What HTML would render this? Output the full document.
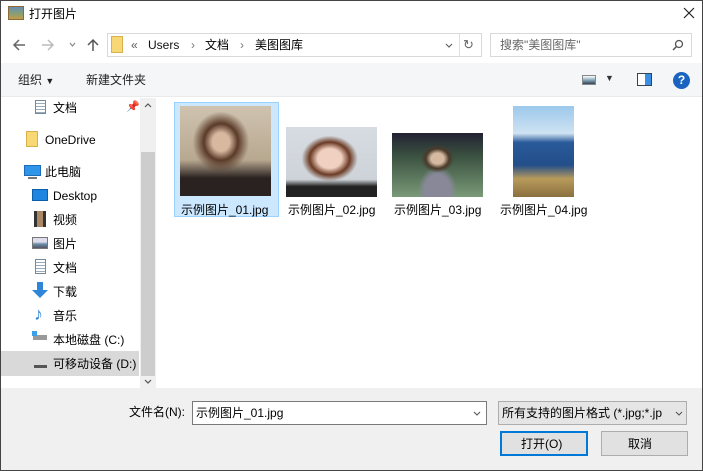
<!DOCTYPE html>
<html><head><meta charset="utf-8"><style>
*{margin:0;padding:0;box-sizing:border-box}
body{width:703px;height:471px;overflow:hidden;background:#fff;font-family:"Liberation Sans","Noto Sans CJK SC",sans-serif;font-size:12px;color:#000;position:relative}
.a{position:absolute;white-space:nowrap}
.t{line-height:16px}
</style></head><body>
<div class="a" style="left:0;top:0;width:703px;height:471px;border:1px solid #444"></div>
<!-- title -->
<div class="a" style="left:8px;top:6px;width:16px;height:14px;background:linear-gradient(#6a8fb0,#8aa070 60%,#c49a4a);border:1px solid #8a6a3a"></div>
<div class="a t" style="left:29px;top:6px">打开图片</div>
<svg class="a" style="left:683px;top:7px" width="12" height="12"><path d="M1 1L11 11M11 1L1 11" stroke="#222" stroke-width="1.2"/></svg>
<!-- nav -->
<svg class="a" style="left:12px;top:39px" width="14" height="12"><path d="M13 6H2M7 1L2 6L7 11" stroke="#666" stroke-width="1.5" fill="none"/></svg>
<svg class="a" style="left:41px;top:39px" width="14" height="12"><path d="M1 6H12M7 1L12 6L7 11" stroke="#bbb" stroke-width="1.5" fill="none"/></svg>
<svg class="a" style="left:69px;top:42px" width="7" height="5"><path d="M1 1L3.5 4L6 1" stroke="#888" stroke-width="1.2" fill="none"/></svg>
<svg class="a" style="left:87px;top:38px" width="12" height="14"><path d="M6 13V2M1 7L6 2L11 7" stroke="#555" stroke-width="1.5" fill="none"/></svg>
<div class="a" style="left:107px;top:33px;width:375px;height:24px;border:1px solid #d9d9d9"></div>
<div class="a" style="left:111px;top:36px;width:12px;height:17px;background:#f8d775;border:1px solid #d8b04c"></div>
<div class="a t" style="left:131px;top:37px;color:#555">«</div>
<div class="a t" style="left:148px;top:37px;color:#111">Users</div>
<div class="a t" style="left:191px;top:37px;color:#777">›</div>
<div class="a t" style="left:205px;top:37px">文档</div>
<div class="a t" style="left:240px;top:37px;color:#777">›</div>
<div class="a t" style="left:255px;top:37px">美图图库</div>
<svg class="a" style="left:445px;top:43px" width="8" height="5"><path d="M1 1L4 4L7 1" stroke="#666" stroke-width="1.2" fill="none"/></svg>
<div class="a" style="left:459px;top:34px;width:1px;height:22px;background:#e0e0e0"></div>
<div class="a t" style="left:463px;top:37px;color:#666;font-size:13px">↻</div>
<div class="a" style="left:490px;top:33px;width:202px;height:24px;border:1px solid #d9d9d9"></div>
<div class="a t" style="left:500px;top:37px;color:#666">搜索"美图图库"</div>
<svg class="a" style="left:672px;top:39px" width="12" height="12"><circle cx="7" cy="5" r="3.5" stroke="#555" stroke-width="1.3" fill="none"/><path d="M4.5 7.5L1 11" stroke="#555" stroke-width="1.5"/></svg>
<!-- toolbar -->
<div class="a" style="left:1px;top:63px;width:701px;height:34px;background:#f5f6f7;border-bottom:1px solid #eaeaea"></div>
<div class="a t" style="left:18px;top:72px;color:#222">组织 <span style="font-size:9px">▼</span></div>
<div class="a t" style="left:86px;top:72px;color:#222">新建文件夹</div>
<div class="a" style="left:582px;top:75px;width:14px;height:10px;background:linear-gradient(#fff,#8ab 50%,#345);border:1px solid #888"></div>
<div class="a" style="left:605px;top:73px;font-size:9px;color:#333">▼</div>
<div class="a" style="left:637px;top:73px;width:15px;height:13px;border:1px solid #345;background:linear-gradient(90deg,#fff 55%,#3a8ee6 55%)"></div>
<div class="a" style="left:673px;top:72px;width:17px;height:17px;border-radius:50%;background:#1a63c0;color:#fff;font-weight:bold;font-size:12px;text-align:center;line-height:17px">?</div>
<!-- nav pane -->
<div class="a" style="left:140px;top:98px;width:16px;height:290px;background:#f0f0f0"></div>
<div class="a" style="left:141px;top:152px;width:14px;height:224px;background:#cdcdcd"></div>
<svg class="a" style="left:144px;top:103px" width="8" height="5"><path d="M1 4L4 1L7 4" stroke="#555" stroke-width="1.2" fill="none"/></svg>
<svg class="a" style="left:144px;top:379px" width="8" height="5"><path d="M1 1L4 4L7 1" stroke="#555" stroke-width="1.2" fill="none"/></svg>
<div class="a" style="left:1px;top:351px;width:138px;height:25px;background:#d9d9d9"></div>
<div class="a" style="left:35px;top:100px;width:11px;height:14px;border:1px solid #789;background:repeating-linear-gradient(#fff 0 2px,#9ab 2px 3px)"></div>
<div class="a t" style="left:53px;top:100px">文档</div>
<div class="a" style="left:126px;top:100px;color:#999;font-size:11px">📌</div>
<div class="a" style="left:26px;top:131px;width:12px;height:16px;background:#f8d775;border:1px solid #d8b04c"></div>
<div class="a t" style="left:45px;top:132px">OneDrive</div>
<div class="a" style="left:24px;top:165px;width:17px;height:11px;background:#2f95e8;border:1px solid #1a6bb8"></div>
<div class="a" style="left:28px;top:177px;width:9px;height:2px;background:#777"></div>
<div class="a t" style="left:45px;top:164px">此电脑</div>
<div class="a" style="left:32px;top:189px;width:16px;height:12px;background:#1e86e0;border:1px solid #0d5da8"></div>
<div class="a t" style="left:53px;top:188px">Desktop</div>
<div class="a" style="left:34px;top:211px;width:12px;height:16px;background:linear-gradient(90deg,#333 25%,#a86 25% 75%,#333 75%)"></div>
<div class="a t" style="left:53px;top:212px">视频</div>
<div class="a" style="left:32px;top:237px;width:16px;height:12px;border:1px solid #777;background:linear-gradient(#dde 40%,#6a8fa8 60%,#556)"></div>
<div class="a t" style="left:53px;top:236px">图片</div>
<div class="a" style="left:35px;top:259px;width:11px;height:15px;border:1px solid #789;background:repeating-linear-gradient(#fff 0 2px,#9ab 2px 3px)"></div>
<div class="a t" style="left:53px;top:260px">文档</div>
<svg class="a" style="left:31px;top:282px" width="18" height="17"><path d="M6 0H12V8H17L9 16L1 8H6Z" fill="#2f86d8"/></svg>
<div class="a t" style="left:53px;top:284px">下载</div>
<div class="a" style="left:34px;top:304px;font-size:18px;color:#2f86d8;line-height:20px">♪</div>
<div class="a t" style="left:53px;top:308px">音乐</div>
<div class="a" style="left:33px;top:335px;width:14px;height:5px;background:#999"></div>
<div class="a" style="left:32px;top:331px;width:5px;height:5px;background:#3ca0e8"></div>
<div class="a t" style="left:53px;top:332px">本地磁盘 (C:)</div>
<div class="a" style="left:34px;top:365px;width:13px;height:3px;background:#555"></div>
<div class="a t" style="left:53px;top:356px">可移动设备 (D:)</div>
<!-- thumbnails -->
<div class="a" style="left:174px;top:102px;width:105px;height:115px;background:#cce8ff;border:1px solid #99d1ff"></div>
<div class="a" style="left:180px;top:106px;width:91px;height:90px;background:radial-gradient(ellipse at 45% 40%,#d8b9a0 0 12%,#5a3a28 24%,transparent 40%),linear-gradient(#cfc3b0,#b8a890 60%,#2a2220 80%)"></div>
<div class="a" style="left:286px;top:127px;width:91px;height:70px;background:radial-gradient(ellipse at 48% 45%,#f0d0c0 0 18%,#6b3a24 30%,transparent 42%),linear-gradient(#d6dce2,#cdd3d8 75%,#222 85%)"></div>
<div class="a" style="left:392px;top:133px;width:91px;height:64px;background:radial-gradient(ellipse at 50% 40%,#d5b9a0 0 10%,#4a3a2a 18%,transparent 26%),radial-gradient(ellipse at 50% 90%,#889 0 20%,transparent 30%),linear-gradient(#223,#3a5040 35%,#7a9a78)"></div>
<div class="a" style="left:513px;top:106px;width:61px;height:91px;background:linear-gradient(#9cc8ec,#cfe3f2 30%,#2a5a9a 40%,#234f8a 65%,#b89a5a 80%,#8a7040)"></div>
<div class="a t" style="left:181px;top:202px">示例图片_01.jpg</div>
<div class="a t" style="left:288px;top:202px">示例图片_02.jpg</div>
<div class="a t" style="left:394px;top:202px">示例图片_03.jpg</div>
<div class="a t" style="left:500px;top:202px">示例图片_04.jpg</div>
<!-- bottom -->
<div class="a" style="left:1px;top:388px;width:701px;height:82px;background:#f0f0f0"></div>
<div class="a t" style="left:129px;top:404px">文件名(N):</div>
<div class="a" style="left:192px;top:401px;width:295px;height:24px;background:#fff;border:1px solid #7a7a7a"></div>
<div class="a t" style="left:196px;top:405px">示例图片_01.jpg</div>
<svg class="a" style="left:473px;top:411px" width="8" height="5"><path d="M1 1L4 4L7 1" stroke="#555" stroke-width="1.1" fill="none"/></svg>
<div class="a" style="left:498px;top:401px;width:189px;height:24px;background:#e5e5e5;border:1px solid #adadad"></div>
<div class="a t" style="left:502px;top:405px">所有支持的图片格式 (*.jpg;*.jp</div>
<svg class="a" style="left:675px;top:411px" width="8" height="5"><path d="M1 1L4 4L7 1" stroke="#555" stroke-width="1.1" fill="none"/></svg>
<div class="a" style="left:500px;top:431px;width:88px;height:25px;background:#e1e1e1;border:2px solid #0078d7"></div>
<div class="a t" style="left:521px;top:436px">打开(O)</div>
<div class="a" style="left:601px;top:431px;width:87px;height:25px;background:#e1e1e1;border:1px solid #adadad"></div>
<div class="a t" style="left:628px;top:436px">取消</div>
</body></html>
